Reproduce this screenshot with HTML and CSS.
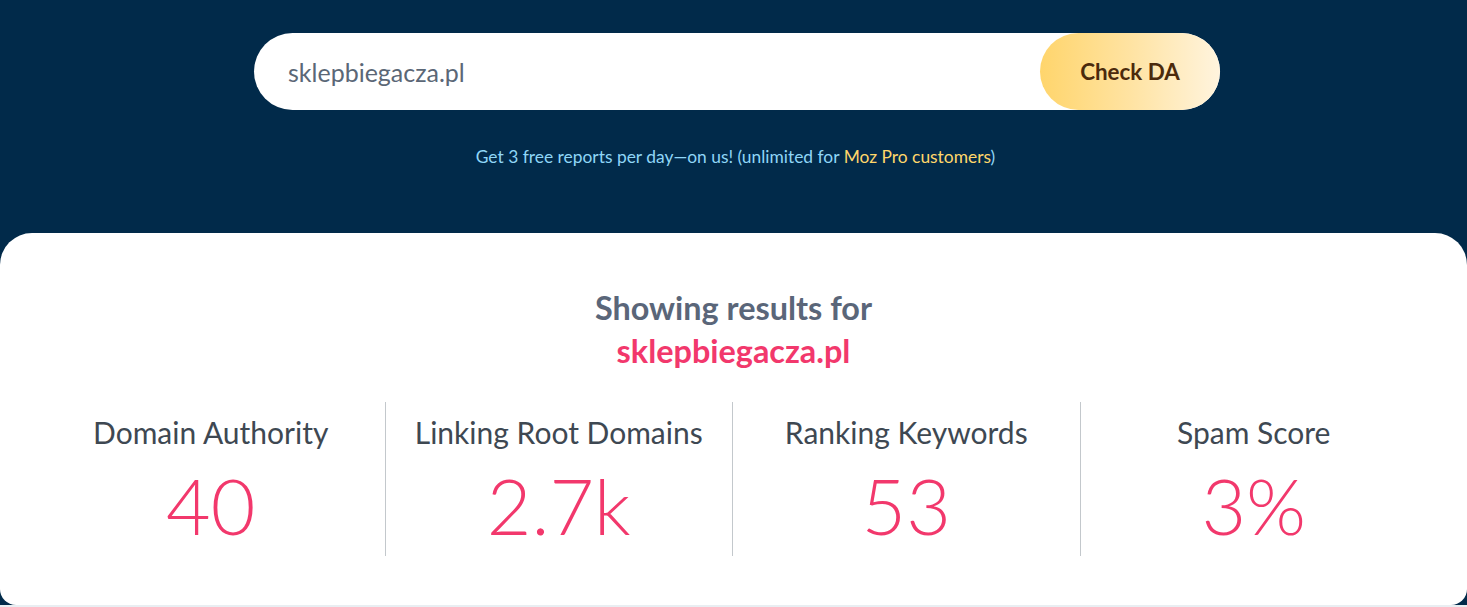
FILE: index.html
```html
<!DOCTYPE html>
<html>
<head>
<meta charset="utf-8">
<link rel="stylesheet" href="styles.css">
</head>
<body>
<div class="page">
  <header class="hero">
    <form class="search">
      <div class="search-input">sklepbiegacza.pl</div>
      <button class="search-btn" type="button">Check DA</button>
    </form>
    <p class="note">Get 3 free reports per day—on us! (unlimited for <span class="note-link">Moz Pro customers</span>)</p>
  </header>
  <section class="card">
    <h2 class="title">Showing results for<br><span class="domain">sklepbiegacza.pl</span></h2>
    <div class="metrics">
      <div class="metric"><div class="label">Domain Authority</div><div class="value">40</div></div>
      <div class="metric"><div class="label">Linking Root Domains</div><div class="value">2.7k</div></div>
      <div class="metric"><div class="label">Ranking Keywords</div><div class="value">53</div></div>
      <div class="metric"><div class="label">Spam Score</div><div class="value">3%</div></div>
    </div>
  </section>
</div>
</body>
</html>
```
FILE: styles.css
```css
* { box-sizing: border-box; }
html, body { margin: 0; padding: 0; }
body {
  background: #e9eef2;
  font-family: Lato, "Open Sans", sans-serif;
  width: 1467px;
  height: 607px;
  overflow: hidden;
}
.page { background: #012a4a; }
.hero {
  padding-top: 33px;
  height: 233px;
  display: flex;
  flex-direction: column;
  align-items: center;
}
.search {
  width: 966px;
  height: 77px;
  margin: 0 0 0 7px;
  background: #fff;
  border-radius: 39px;
  display: flex;
  align-items: stretch;
}
.search-input {
  flex: 1;
  padding-left: 34px;
  display: flex;
  align-items: center;
  font-size: 25px;
  color: #5b6776;
}
.search-btn {
  width: 180px;
  border: 0;
  border-radius: 39px;
  background: linear-gradient(90deg, #ffd56c 0%, #ffe3a2 50%, #fff4de 100%);
  font-family: Lato, sans-serif;
  font-weight: 700;
  font-size: 22.4px;
  color: #4b2a0c;
  padding: 0;
}
.note {
  margin: 36px 0 0 4px;
  font-size: 17.4px;
  color: #8fd6f7;
}
.note-link { color: #ffd76a; }
.card {
  background: #fff;
  border-radius: 32px 32px 16px 16px;
  height: 372px;
  padding-top: 53px;
}
.title {
  margin: 0;
  text-align: center;
  font-size: 32.4px;
  font-weight: 700;
  line-height: 43px;
  color: #5a6679;
}
.domain { color: #f2386c; }
.metrics {
  margin: 30px 40px 0 37px;
  display: grid;
  grid-template-columns: repeat(4, 1fr);
}
.metric {
  height: 154px;
  text-align: center;
  border-left: 1px solid #c3c8cc;
  padding-top: 12px;
}
.metric:first-child { border-left: 0; }
.label {
  font-size: 30px;
  color: #3e4852;
  line-height: 36px;
}
.value {
  margin-top: 15px;
  font-size: 77px;
  font-weight: 300;
  line-height: 80px;
  color: #f2386c;
}
```
